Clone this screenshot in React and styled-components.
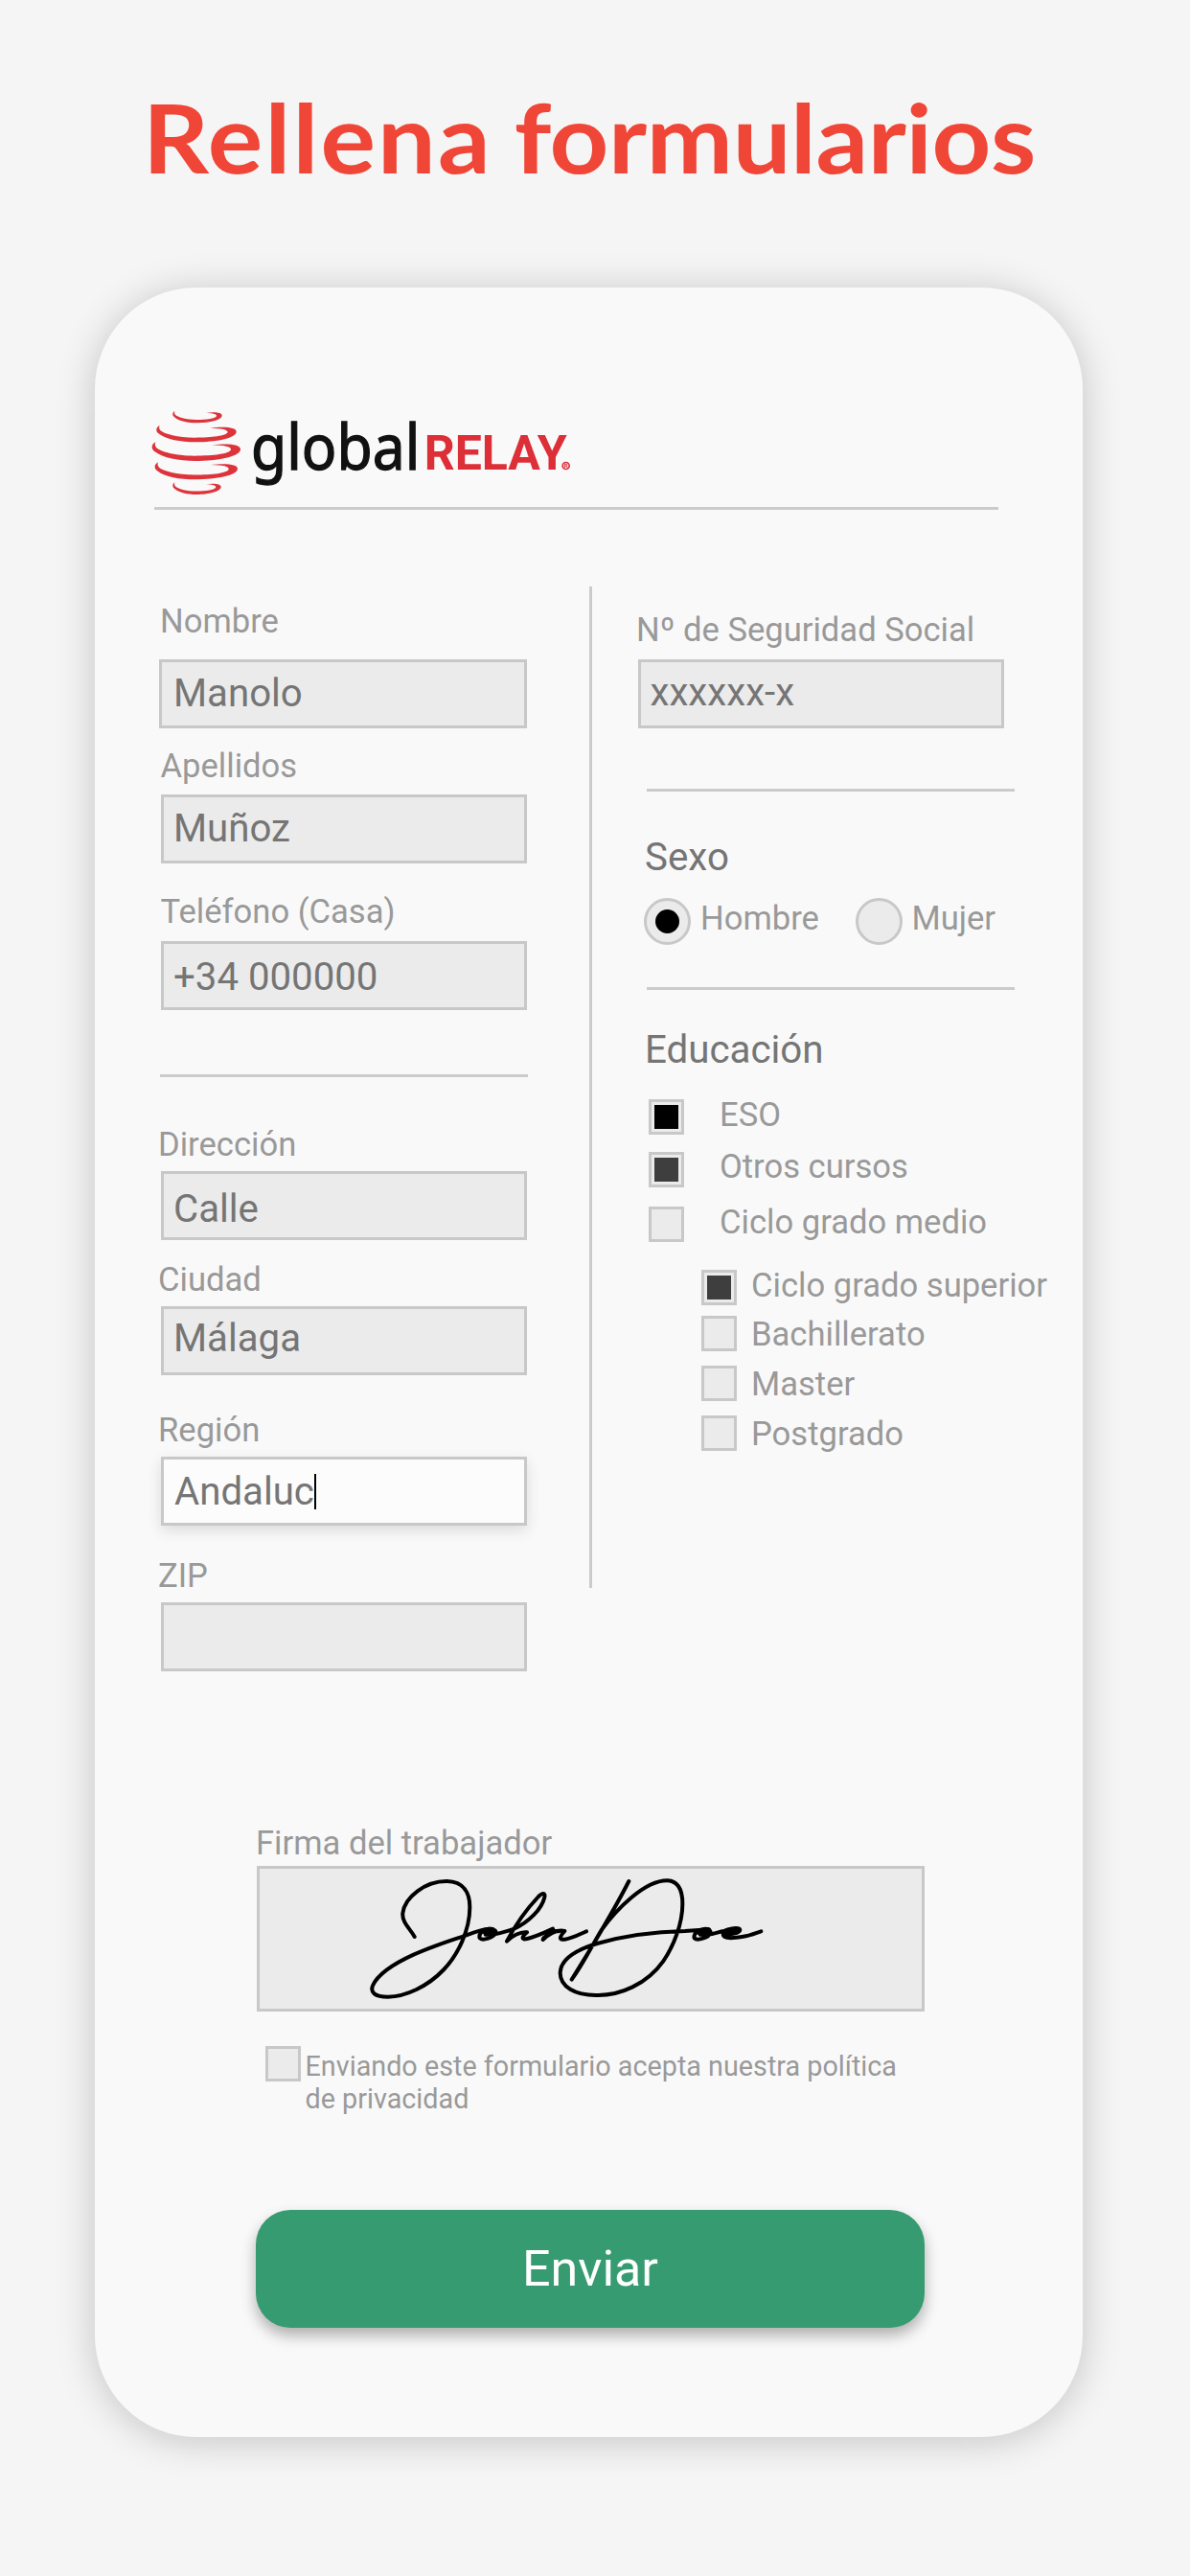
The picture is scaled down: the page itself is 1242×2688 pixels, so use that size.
import React from "react";
import styled, { createGlobalStyle } from "styled-components";

const GlobalStyle = createGlobalStyle`
  * { box-sizing: border-box; }
  body {
    margin: 0;
    background: #f5f5f5;
    font-family: Roboto, "Liberation Sans", sans-serif;
  }
`;

const Page = styled.main`
  display: flex;
  flex-direction: column;
  align-items: flex-start;
  width: 1242px;
  height: 2688px;
  overflow: hidden;
  background: #f5f5f5;
`;

const Title = styled.h1`
  margin: 83px 0 97px 149px;
  color: #f04638;
  font: 700 99px/120px Lato, "Open Sans", sans-serif;
  word-spacing: -3px;
  white-space: nowrap;
  transform: scaleX(1.088);
  transform-origin: left center;
`;

const TitleWord = styled.span`
  letter-spacing: ${(p) => p.$tracking}px;
`;

const Card = styled.section`
  display: flex;
  flex-direction: column;
  width: 1031px;
  height: 2243px;
  margin-left: 98.5px;
  padding-top: 117px;
  border-radius: 106px;
  background: #f9f9f9;
  box-shadow: 0 4px 40px rgba(0, 0, 0, 0.2);
`;

const Header = styled.header`
  display: flex;
  flex-direction: column;
  margin-left: 59.8px;
`;

const LogoDrawing = styled.svg`
  display: block;
  width: 440px;
  height: 102px;
`;

const Rule = styled.hr`
  flex: none;
  width: ${(p) => p.$width}px;
  height: 3px;
  margin: ${(p) => p.$top}px 0 0 ${(p) => p.$left || 0}px;
  border: 0;
  background: #cbcbcb;
`;

const Columns = styled.div`
  display: grid;
  grid-template-columns: 450px 3px 1fr;
  height: 1132px;
  margin: 80px 0 0 66px;
`;

const VerticalRule = styled.div`
  height: 1045px;
  background: #cbcbcb;
`;

const Column = styled.div`
  display: flex;
  flex-direction: column;
  align-items: flex-start;
  padding-left: ${(p) => p.$inset || 0}px;
`;

const Label = styled.label`
  color: #999;
  font-size: 34.6px;
  line-height: 40px;
  white-space: nowrap;
  margin: ${(p) => p.$top || 0}px 0 ${(p) => p.$bottom || 0}px ${(p) => p.$left || 0}px;
`;

const Box = styled.div`
  display: flex;
  align-items: center;
  width: ${(p) => p.$width || 382}px;
  height: 72px;
  margin-left: ${(p) => p.$left || 0}px;
  padding-left: ${(p) => p.$pad || 10}px;
  padding-top: ${(p) => p.$drop || 0}px;
  padding-bottom: ${(p) => p.$lift || 0}px;
  border: 3px solid #c8c8c8;
  background: ${(p) => (p.$active ? "#fcfcfc" : "#ebebeb")};
  box-shadow: ${(p) => (p.$active ? "0 5px 14px rgba(0, 0, 0, 0.12)" : "none")};
  color: #757575;
  font-size: 40.2px;
  line-height: 48px;
  white-space: nowrap;
`;

const Caret = styled.span`
  width: 2px;
  height: 37px;
  background: #000;
`;

const Heading = styled.h2`
  margin: ${(p) => p.$top}px 0 0 9px;
  color: #757575;
  font-size: 40.3px;
  font-weight: 400;
  line-height: 48px;
`;

const RadioRow = styled.div`
  display: flex;
  align-items: flex-start;
  margin: 18px 0 0 7.5px;
`;

const RadioLabel = styled(Label)`
  width: ${(p) => p.$width}px;
`;

const Radio = styled.span`
  display: grid;
  place-items: center;
  flex: none;
  width: 49px;
  height: 49px;
  border: 3px solid #c8c8c8;
  border-radius: 50%;
  background: #ebebeb;
`;

const RadioDot = styled.span`
  width: 25px;
  height: 25px;
  border-radius: 50%;
  background: #000;
`;

const OptionRow = styled.div`
  display: flex;
  align-items: flex-start;
  height: 37px;
  margin-top: ${(p) => p.$top}px;
  margin-left: ${(p) => p.$left}px;
`;

const Check = styled.span`
  display: grid;
  place-items: center;
  flex: none;
  width: 37px;
  height: 37px;
  border: 3px solid #c8c8c8;
  background: #ebebeb;
`;

const CheckMark = styled.span`
  width: 25px;
  height: 25px;
  background: ${(p) => p.$tone};
`;

const Footer = styled.footer`
  display: flex;
  flex-direction: column;
  align-items: flex-start;
  width: 698px;
  margin: 159px 0 0 169.5px;
`;

const SignatureBox = styled.div`
  width: 697px;
  height: 152px;
  border: 3px solid #c8c8c8;
  padding-left: 89px;
  background: #ebebeb;
`;

const SignatureDrawing = styled.svg`
  display: block;
  width: 460px;
  height: 145px;
`;

const Consent = styled.div`
  display: flex;
  align-items: flex-start;
  gap: 4.5px;
  margin: 36px 0 0 9px;
`;

const ConsentText = styled.p`
  width: 640px;
  margin: 4px 0 0;
  color: #999;
  font-size: 28.75px;
  line-height: 34px;
  white-space: nowrap;
`;

const SendButton = styled.button`
  width: 698px;
  height: 123px;
  margin: 99px 0 0 -1px;
  padding: 0;
  border: 0;
  border-radius: 36px;
  background: #369b70;
  box-shadow: 0 8px 15px rgba(0, 0, 0, 0.3);
  color: #fff;
  font: 400 52px/61px Roboto, "Liberation Sans", sans-serif;
`;

const rings = [
  { x: 122, y: 87, w: 154, h: 37 },
  { x: 71, y: 132, w: 250, h: 52 },
  { x: 57, y: 184, w: 277, h: 59 },
  { x: 66, y: 247, w: 259, h: 54 },
  { x: 122, y: 310, w: 151, h: 38 },
];

function Logo() {
  return (
    <LogoDrawing viewBox="55 51 1320 306" role="img" aria-label="Global Relay">
      {rings.map((r) => (
        <path
          key={r.y}
          fill="#dd333b"
          transform={`translate(${r.x} ${r.y}) scale(${r.w / 277} ${r.h / 59})`}
          d="M11 0C-3 7 -4 22 9 30C34 50 83 59 135 59C205 59 277 45 277 22C277 7 238 3 187 9C228 10 249 15 247 24C242 37 193 43 133 43C73 43 27 30 14 18C9 12 8 6 11 0Z"
        />
      ))}
      <text
        x="367"
        y="270"
        fill="#111"
        stroke="#111"
        strokeWidth="4"
        fontFamily="'Noto Sans', sans-serif"
        fontSize="199"
        textLength="529"
        lengthAdjust="spacingAndGlyphs"
      >
        global
      </text>
      <text
        x="909"
        y="270"
        fill="#dc2f38"
        fontFamily="Roboto, sans-serif"
        fontWeight="700"
        fontSize="151"
        textLength="447"
        lengthAdjust="spacingAndGlyphs"
      >
        RELAY
      </text>
      <circle cx="1353" cy="258" r="10.5" fill="none" stroke="#dc2f38" strokeWidth="5" />
      <path d="M1349 264v-11h5a3 3 0 0 1 0 6h-4M1354 259l4 5" fill="none" stroke="#dc2f38" strokeWidth="3" />
    </LogoDrawing>
  );
}

function Signature() {
  return (
    <SignatureDrawing viewBox="0 30 1380 435" role="img" aria-label="John Doe">
      <g fill="none" stroke="#000" strokeWidth="12" strokeLinecap="round" strokeLinejoin="round">
        <path d="M218 243C203 216 178 198 181 169C187 119 252 68 320 69C371 70 391 105 391 150C391 225 352 301 310 345C259 399 190 430 135 431C92 431 79 416 87 396C103 360 160 324 215 299C275 272 338 253 380 238C412 225 437 216 462 219" />
        <path d="M462 219C438 214 417 232 422 247C430 257 468 245 473 229C472 219 448 216 438 230C462 242 493 229 528 219C575 198 616 157 625 119C628 104 618 105 606 117C575 150 536 201 507 257C523 240 550 226 570 229C553 244 551 254 571 249C600 242 625 230 651 218L620 252C643 231 667 220 688 225C672 243 668 254 689 251C716 247 734 235 756 226" />
        <path d="M438 226L463 224L458 237L440 236M622 247L650 224L669 226" />
        <path d="M889 69C850 146 805 220 767 284L710 377C745 330 775 268 803 222C850 158 938 66 1010 67C1048 69 1057 105 1057 140C1057 202 1029 272 997 319C945 392 861 427 790 426C720 427 673 399 674 355C676 310 727 283 790 264C873 240 977 227 1065 225L1141 220C1113 213 1090 232 1094 247C1103 257 1140 246 1145 229C1143 218 1118 219 1108 231C1136 244 1162 229 1187 225C1204 216 1235 213 1237 221C1237 232 1202 237 1184 236C1185 253 1230 245 1255 241C1272 238 1287 231 1303 226" />
        <path d="M1110 227L1136 225L1130 237L1112 236M1192 231L1228 223" />
      </g>
    </SignatureDrawing>
  );
}

function Field({ label, value, top, gap, labelLeft, left = 3.5, pad = 10, width, active, drop, lift }) {
  return (
    <>
      <Label $top={top} $bottom={gap} $left={labelLeft}>{label}</Label>
      <Box $left={left} $width={width} $active={active} $drop={drop} $lift={lift} $pad={pad}>
        {value}
        {active && <Caret />}
      </Box>
    </>
  );
}

function Option({ label, tone, top, left = 12.5, gap = 37.5, lift = -5 }) {
  return (
    <OptionRow $top={top} $left={left}>
      <Check>{tone && <CheckMark $tone={tone} />}</Check>
      <Label $top={lift} $left={gap}>{label}</Label>
    </OptionRow>
  );
}

export default function App() {
  return (
    <>
      <GlobalStyle />
      <Page>
        <Title>
          <TitleWord $tracking={2}>Rellena</TitleWord>{" "}
          <TitleWord $tracking={-0.35}>formularios</TitleWord>
        </Title>
        <Card>
          <Header>
            <Logo />
            <Rule $width={881} $top={10} $left={3} />
          </Header>

          <Columns>
            <Column>
              <Field label="Nombre" value="Manolo" top={16} gap={20} labelLeft={2.5} left={1.5} width={384} pad={12} />
              <Field label="Apellidos" value="Muñoz" top={19} gap={10} labelLeft={3} />
              <Field label="Teléfono (Casa)" value="+34 000000" top={30} gap={11} labelLeft={3} drop={3} />
              <Rule $width={384} $top={67} $left={2.5} />
              <Field label="Dirección" value="Calle" top={50} gap={8} labelLeft={0.5} drop={7} />
              <Field label="Ciudad" value="Málaga" top={21} gap={8} labelLeft={0.5} lift={4} />
              <Field label="Región" value="Andaluc" top={37} gap={8} labelLeft={0.5} pad={11} drop={1} active />
              <Field label="ZIP" top={32} gap={8} labelLeft={0.5} />
            </Column>

            <VerticalRule />

            <Column $inset={46.5}>
              <Field label="Nº de Seguridad Social" value="xxxxxx-x" top={25} gap={11} labelLeft={0} left={1.5} lift={3} />
              <Rule $width={384} $top={63} $left={11} />
              <Heading $top={45}>Sexo</Heading>
              <RadioRow>
                <Radio><RadioDot /></Radio>
                <RadioLabel $top={1} $left={10.5} $width={162}>Hombre</RadioLabel>
                <Radio />
                <Label $top={1} $left={9.5}>Mujer</Label>
              </RadioRow>
              <Rule $width={384} $top={44} $left={11} />
              <Heading $top={39}>Educación</Heading>
              <Option label="ESO" tone="#000" top={27} lift={-4} />
              <Option label="Otros cursos" tone="#3e3e3e" top={18} />
              <Option label="Ciclo grado medio" top={20} lift={-4} />
              <Option label="Ciclo grado superior" tone="#3e3e3e" top={29} left={67.5} gap={15.5} lift={-4} />
              <Option label="Bachillerato" top={11} left={67.5} gap={15.5} lift={-1} />
              <Option label="Master" top={15} left={67.5} gap={15.5} lift={-1} />
              <Option label="Postgrado" top={15} left={67.5} gap={15.5} lift={-1} />
            </Column>
          </Columns>

          <Footer>
            <Label $bottom={4} $left={-1}>Firma del trabajador</Label>
            <SignatureBox><Signature /></SignatureBox>
            <Consent>
              <Check />
              <ConsentText>
                Enviando este formulario acepta nuestra política<br />de privacidad
              </ConsentText>
            </Consent>
            <SendButton type="button">Enviar</SendButton>
          </Footer>
        </Card>
      </Page>
    </>
  );
}
